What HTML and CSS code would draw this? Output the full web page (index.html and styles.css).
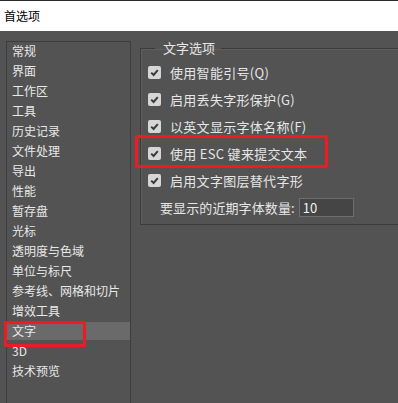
FILE: index.html
```html
<!DOCTYPE html>
<html lang="zh-CN">
<head>
    <meta charset="UTF-8">
    <meta name="viewport" content="width=device-width, initial-scale=1.0">
    <link rel="stylesheet" href="styles.css">
    <title>首选项</title>
</head>
<body>

<div class="titlebar">首选项</div>

<div class="main">
    <ul class="nav">
        <li>常规</li>
        <li>界面</li>
        <li>工作区</li>
        <li>工具</li>
        <li>历史记录</li>
        <li>文件处理</li>
        <li>导出</li>
        <li>性能</li>
        <li>暂存盘</li>
        <li>光标</li>
        <li>透明度与色域</li>
        <li>单位与标尺</li>
        <li>参考线、网格和切片</li>
        <li>增效工具</li>
        <li class="active marked">文字</li>
        <li>3D</li>
        <li>技术预览</li>
    </ul>

    <fieldset class="group">
        <legend>文字选项</legend>

        <label class="check">
            <span class="box"><svg viewBox="0 0 13 13" width="13" height="13"><path d="M3.2 6.6 L5.6 9 L9.8 4.2" /></svg></span>
            使用智能引号(Q)
        </label>
        <label class="check">
            <span class="box"><svg viewBox="0 0 13 13" width="13" height="13"><path d="M3.2 6.6 L5.6 9 L9.8 4.2" /></svg></span>
            启用丢失字形保护(G)
        </label>
        <label class="check">
            <span class="box"><svg viewBox="0 0 13 13" width="13" height="13"><path d="M3.2 6.6 L5.6 9 L9.8 4.2" /></svg></span>
            以英文显示字体名称(F)
        </label>
        <label class="check marked">
            <span class="box"><svg viewBox="0 0 13 13" width="13" height="13"><path d="M3.2 6.6 L5.6 9 L9.8 4.2" /></svg></span>
            使用 ESC 键来提交文本
        </label>
        <label class="check">
            <span class="box"><svg viewBox="0 0 13 13" width="13" height="13"><path d="M3.2 6.6 L5.6 9 L9.8 4.2" /></svg></span>
            启用文字图层替代字形
        </label>

        <div class="count">
            <label for="recent">要显示的近期字体数量:</label>
            <input type="text" id="recent" value="10">
        </div>
    </fieldset>
</div>

</body>
</html>
```

FILE: styles.css
```css
body {
    font-family: "Noto Sans CJK SC", sans-serif;
    background-color: #535353;
    margin: 0;
    padding: 0;
    height: 403px;
    overflow: hidden;
}

.titlebar {
    background-color: #fff;
    border-top: 1px solid #2b2b2b;
    height: 30px;
    line-height: 29px;
    padding-left: 4px;
    font-size: 12px;
    color: #000;
}

.main {
    display: flex;
    align-items: flex-start;
    height: 372px;
    overflow: hidden;
}

/* lista de categorias */
.nav {
    list-style: none;
    margin: 10px 0 0 6px;
    padding: 0;
    width: 125px;
    height: 400px;
    box-sizing: border-box;
    border: 1px solid #3d3d3d;
    flex-shrink: 0;
}

.nav li {
    height: 18px;
    line-height: 18px;
    margin-bottom: 2px;
    padding-left: 5px;
    font-size: 12px;
    color: #e8e8e8;
    position: relative;
}

.nav li.active {
    background-color: #6a6a6a;
}

.marked::after {
    content: "";
    position: absolute;
    border: 3px solid #ec1c24;
    border-radius: 2px;
    box-sizing: border-box;
    box-shadow: 0 0 1px rgba(236, 28, 36, 0.7), inset 0 0 1px rgba(236, 28, 36, 0.7);
    pointer-events: none;
}

.nav li.marked::after {
    left: -3px;
    top: -1px;
    width: 82px;
    height: 26px;
}

/* grupo de opciones */
.group {
    margin: 9px 0 0 9px;
    padding: 3px 0 7px 7px;
    width: 300px;
    flex-shrink: 0;
    border: 1px solid #3b3b3b;
    box-shadow: inset 1px 1px 0 #5e5e5e;
    color: #e6e6e6;
    font-size: 13px;
}

.group legend {
    margin-left: 7px;
    padding: 0 6px 0 8px;
    line-height: 16px;
    color: #e6e6e6;
}

.check {
    display: flex;
    align-items: center;
    height: 27px;
    letter-spacing: 0.3px;
    position: relative;
    width: 170px;
}

.check .box {
    width: 13px;
    height: 13px;
    border-radius: 2px;
    background-color: #d6d6d6;
    margin-right: 9px;
    flex-shrink: 0;
    display: block;
}

.check svg {
    display: block;
}

.check svg path {
    fill: none;
    stroke: #3a3a3a;
    stroke-width: 2;
}

.check.marked::after {
    left: -13px;
    top: -5px;
    width: 193px;
    height: 33px;
}

.count {
    display: flex;
    align-items: center;
    height: 19px;
    margin-top: 4px;
    padding-left: 12px;
    letter-spacing: 0.1px;
}

.count label {
    margin-right: 4px;
}

.count input {
    width: 55px;
    height: 19px;
    box-sizing: border-box;
    border: 1px solid #6e6e6e;
    background-color: #454545;
    color: #f2f2f2;
    font-family: "Noto Sans CJK SC", sans-serif;
    font-size: 13px;
    padding: 0 3px;
    outline: none;
}
```
